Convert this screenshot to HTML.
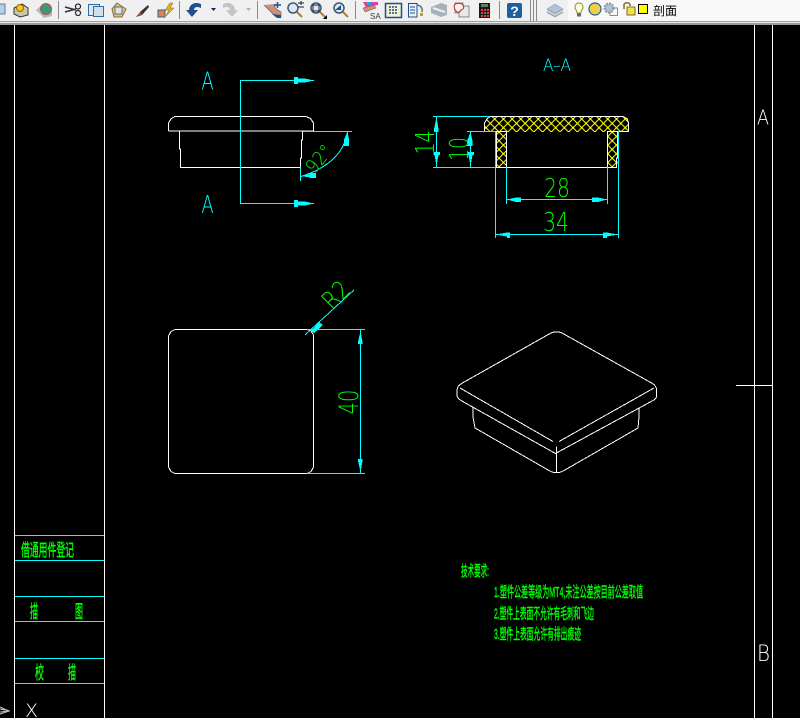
<!DOCTYPE html>
<html><head><meta charset="utf-8"><style>
html,body{margin:0;padding:0;background:#000;width:800px;height:718px;overflow:hidden}
svg{display:block}
text{font-family:"Liberation Sans","Noto Sans CJK SC",sans-serif}
.c{fill:#00ffff}.g{fill:#00ff00}.w{fill:#fff}
.t{font-family:"DejaVu Sans ExtraLight","DejaVu Sans Light","Liberation Sans",sans-serif}
.b{stroke:#00ff00;stroke-width:.45}
.x path,.x rect{shape-rendering:crispEdges}
</style></head><body>
<svg width="800" height="718" viewBox="0 0 800 718" xmlns="http://www.w3.org/2000/svg">
<defs>
<pattern id="h" width="8.7" height="8.7" patternUnits="userSpaceOnUse" x="486" y="119">
<path d="M0 0L8.7 8.7M8.7 0L0 8.7" stroke="#ffff00" stroke-width="1" fill="none" shape-rendering="crispEdges"/>
<rect x="3.4" y="3.4" width="2" height="2" fill="#ffff00"/>
<rect x="-1" y="-1" width="2" height="2" fill="#ffff00"/>
<rect x="7.7" y="-1" width="2" height="2" fill="#ffff00"/>
<rect x="-1" y="7.7" width="2" height="2" fill="#ffff00"/>
<rect x="7.7" y="7.7" width="2" height="2" fill="#ffff00"/>
</pattern>
</defs>
<rect width="800" height="718" fill="#000"/>

<!-- toolbar -->
<rect width="800" height="21" fill="#f0f0f0"/>
<rect y="21" width="800" height="1" fill="#a0a0a0"/>
<rect y="22" width="800" height="1" fill="#e8e8e8"/>
<rect y="23" width="800" height="2" fill="#9a9a9a"/>
<rect x="568" y="0" width="232" height="21" fill="#f8f8f8"/>
<g stroke="#8a8a8a" stroke-width="1">
<path d="M58.5 1V19M179.5 1V19M257.5 1V19M355.5 1V19M499.5 1V19"/>
<path d="M530.5 0V21M533.5 0V21M536.5 0V21"/>
</g>
<rect x="-3" y="4" width="8" height="10" fill="#b8cfe0" stroke="#5a80a8"/>
<path d="M14 8L22 4L28 8V15L20 17L14 14Z" fill="#c8c8b0" stroke="#333"/><circle cx="20" cy="8" r="3.5" fill="#f5c518" stroke="#a06010"/>
<path d="M36 10L44 3L52 8V16L44 18Z" fill="#a8bcc8"/><circle cx="46" cy="9" r="5.5" fill="#3a9a78" stroke="#c05050"/>
<path d="M65 7L76 10M65 12L76 9" stroke="#334" stroke-width="1.5"/><circle cx="78" cy="6.5" r="2.5" fill="none" stroke="#223" stroke-width="1.2"/><circle cx="78" cy="13" r="2.5" fill="none" stroke="#223" stroke-width="1.2"/>
<rect x="88.5" y="4.5" width="11" height="11" fill="#dce8f2" stroke="#2f6ca8"/><rect x="93.5" y="6.5" width="10" height="10" fill="#cfe0ec" stroke="#2f6ca8"/>
<path d="M112 9L117 3L126 9L122 17H114Z" fill="#e8c060" stroke="#807050"/><rect x="115" y="7" width="7" height="7" fill="#d8e4ee" stroke="#607080"/>
<path d="M136 17L140 12L148 5L149 7L142 15Z" fill="#333"/><path d="M136 17L140 12L142 14Z" fill="#a06040"/>
<rect x="158" y="10" width="7" height="7" fill="#f08040" stroke="#2060b0"/><path d="M170 3L165 10H169L166 16L174 8H170L173 3Z" fill="#e0b020" stroke="#806010" stroke-width=".5"/>
<path d="M201 4C194 1 189 5 189 10L186 10L192 17L198 10L194 10C194 7 197 6 201 8Z" fill="#1f4f8f"/>
<path d="M211 8H216L213.500 11Z" fill="#102060"/>
<path d="M223 4C230 1 235 5 235 10L238 10L232 17L226 10L230 10C230 7 227 6 223 8Z" fill="#c4c4c4"/>
<path d="M246 8H251L248.500 11Z" fill="#b0b0b0"/>
<path d="M264 5L272 13L277 17H281V12L275 8V4" fill="#c89080" stroke="#805060" stroke-width=".7"/><path d="M274 5H281M277.500 2V8" stroke="#1f4f8f" stroke-width="1.5"/><path d="M272 14L277 18H281V15Z" fill="#1f4f8f"/>
<g fill="#dde8f0" stroke="#3a5a70" stroke-width="1.5"><circle cx="293" cy="8" r="5"/><circle cx="316" cy="8" r="5"/><circle cx="339" cy="8" r="5"/></g>
<g stroke="#b07a30" stroke-width="2"><path d="M297 12L302 17M320 12L325 17M343 12L348 17"/></g>
<path d="M298 3H304M301 1V5M298 7H304" stroke="#123" stroke-width="1"/>
<rect x="313" y="5" width="6" height="6" fill="none" stroke="#223"/><path d="M323 19L327 15V19Z" fill="#000"/>
<path d="M335 10L341 5V10Z" fill="#1f4f8f"/>
<path d="M363 2H378V5L372 6L366 8Z" fill="#e040a0"/><path d="M367 2H371V5H367Z" fill="#30a0e0"/><path d="M363 8L374 5L376 8L365 12Z" fill="#c89080" stroke="#705050" stroke-width=".5"/><text x="370" y="19" font-size="8" fill="#304050">SA</text>
<rect x="385.500" y="3.500" width="16" height="14" fill="#f4f0d0" stroke="#1f4f8f" stroke-width="1.500"/><path d="M389 7H398M389 10H398M389 13H398" stroke="#1f4f8f" stroke-width="1.500" stroke-dasharray="2 1"/>
<path d="M408.500 3.500H417V17H408.500Z" fill="#e8f0f8" stroke="#1f4f8f"/><path d="M410 7H415M410 10H415M410 13H415" stroke="#1f4f8f"/><path d="M417 5Q423 6 422 12" fill="none" stroke="#607080" stroke-width="1.500"/><rect x="420" y="13" width="3" height="3" fill="#c0a020"/>
<path d="M431 7L441 3L447 5V15L441 17L431 13Z" fill="#a8b0b8"/><path d="M433 8L445 12" stroke="#e8f0f0" stroke-width="2"/>
<path d="M455 3H463V6H469V17H459V13H455Z" fill="#e8e8e8" stroke="#666" stroke-width=".7"/><path d="M455 4Q460 2 463 5Q465 9 461 10Q459 14 456 11Q453 8 455 4Z" fill="#f4f4f4" stroke="#d02020"/>
<rect x="479" y="3" width="11" height="15" fill="#1a1a1a"/><rect x="481" y="4" width="7" height="3" fill="#608060"/><path d="M481 9h2v2h-2zM484 9h2v2h-2zM487 9h2v2h-2zM481 12h2v2h-2zM484 12h2v2h-2zM487 12h2v2h-2zM481 15h2v2h-2zM484 15h2v2h-2zM487 15h2v2h-2z" fill="#e04040"/>
<rect x="507" y="3" width="15" height="15" rx="2" fill="#1f5f9f"/><text x="514.500" y="16" font-size="14" font-weight="bold" fill="#fff" text-anchor="middle">?</text>
<path d="M547 9L555 4L563 9L555 13Z" fill="#b0c4d8" stroke="#8090a0" stroke-width=".5"/><path d="M547 12L555 16.500L563 12" fill="none" stroke="#90a4b4" stroke-width="1.500"/><path d="M547 9.500L555 14L563 9.500" fill="none" stroke="#90a4b4"/>
<path d="M579 3C575 3 574.500 7 575.500 9C576.500 11 577 11 577 13H581C581 11 581.500 11 582.500 9C583.500 7 583 3 579 3Z" fill="#fdfde0" stroke="#90902a"/><rect x="577" y="13.500" width="4" height="3" fill="#667"/>
<circle cx="595" cy="9" r="6" fill="#f0d040" stroke="#2060a0" stroke-width="1.200"/>
<circle cx="609" cy="8" r="4.500" fill="#b0c0d0" stroke="#8898a8" stroke-width="2" stroke-dasharray="2 1"/><path d="M612 8H617.500V15.500H610V12" fill="none" stroke="#8090a0"/>
<path d="M624 9V5C624 2 630 2 630 5V6" fill="none" stroke="#807020" stroke-width="1.500"/><rect x="627" y="7" width="8" height="8" fill="#f0e050" stroke="#807020"/>
<rect x="638.500" y="4.500" width="9" height="9" fill="#ffff00" stroke="#000"/>
<text x="653" y="15" font-size="12" fill="#000" style='font-family:"Noto Sans CJK SC",sans-serif'>剖面</text>

<g class="x">
<g stroke="#fff" stroke-width="1" fill="none">
<path d="M14.500 25V718M104.500 25V718M754.500 25V718M772.500 25V718M736 385.500H772"/>
</g>
<g stroke="#0ff" fill="none" stroke-width="1">
<path d="M15 535.500H104M15 560.500H104M15 596.500H104M15 621.500H104M15 658.500H104M15 683.500H104"/>
</g>
<path d="M0 707L9 711L0 714M0 709L10 711M0 712L10 711" stroke="#bbb" fill="none"/>

<!-- front view -->
<g stroke="#fff" fill="none" stroke-width="1">
<path d="M168.500 131V123L171 119L174.500 116.500H306L310.500 118.500L313.500 123V131H168.500"/>
<path d="M179.500 131V149H180.500V167.500H300.500V158H301.500V140H302.500V131"/>
</g>
<g stroke="#0ff" fill="none" stroke-width="1">
<path d="M314 80.500H240.500V203.500H314"/>
<path d="M303 131.500H352M300.500 167V181"/>
<path d="M347.500 131.500Q343 163 301 176.500"/>
</g>
<g fill="#0ff">
<path d="M294 77H298V78.500H305L314 80.500L305 82.500H298V84H294Z"/>
<path d="M294 200H298V201.500H305L314 203.500L305 205.500H298V207H294Z"/>
<path d="M347.500 132L349 139V146H344V139.500Z"/>
<path d="M301 176L310 174V173H316V178H310V177.500Z"/>
</g>

<!-- section view -->
<path d="M484.500 131.500V123L487 119L490 116.500H623L627 118.500L628.500 123V131.500H617.500V167.500H496.500V131.500Z" fill="url(#h)"/>
<rect x="507" y="132" width="100" height="35" fill="#000"/>
<g stroke="#fff" fill="none" stroke-width="1">
<path d="M484.500 123L487 119L490 116.500H623L627 118.500L628.500 123V131.500H607.500V167.500H506.500V131.500H484.500Z"/>
<path d="M496.500 131.500V167.500H506.500M607.500 167.500H616.500V158H617.500V131.500"/>
</g>
<g stroke="#0ff" fill="none" stroke-width="1">
<path d="M433 116.500H489M433 167.500H496M436.500 116V167.500"/>
<path d="M467 131.500H495.500M470.500 131V167.500"/>
<path d="M495.500 131V238M618.500 131V238"/>
<path d="M506.500 167V204M607.500 167V204"/>
<path d="M506 199.500H607M495.500 234.500H618"/>
</g>
<g fill="#0ff">
<path d="M436.500 117L438.500 129V132H434V129Z"/><path d="M436.500 166L438.500 155H440V152H433.500V155H434.500Z"/>
<path d="M470.500 132L472.500 141V146H467V141Z"/><path d="M470.500 166L472.500 155H474V152H468V155H468.500Z"/>
<path d="M507 199.500L516 197.500H521V202H516Z"/><path d="M607 199.500L598 197.500H592V202H598Z"/>
<path d="M496 234.500L507 232.500H510V238H507V236.500Z"/><path d="M618 234.500L607 232.500H603V238H607V236.500Z"/>
</g>

<!-- plan view -->
<path d="M175 329.500H307L311 331L313.500 335V467L311 471.500L307 473.500H175L171 471.500L168.500 467V336L171 331.500Z" fill="none" stroke="#fff"/>
<g stroke="#0ff" fill="none" stroke-width="1">
<path d="M307 329.500H365M307 473.500H365M360.500 329V473"/>
<path d="M354 290L305 335"/>
</g>
<g fill="#0ff">
<path d="M360.500 331L362.500 342V344H358V342Z"/><path d="M360.500 472L362.500 461V459H358V461Z"/>
<path d="M311 331L319 322L323 325L314 333Z"/>
</g>

<!-- iso -->
<g stroke="#fff" fill="none" stroke-width="1">
<path d="M461.500 383.500L551 333Q556.500 330.500 562 333L652.500 383.500Q656.500 386 656.500 390V397Q656 399 653 400.500L560 451L555.500 453.500L551 451L461 400.500Q457 398 457 395V390Q457.500 386 461.500 383.500Z"/>
<path d="M460 388L553 441.500M654 388L559 441.500M556.500 446.500V473"/>
<path d="M473 407.500V417L475 428L549 470.500Q556.500 475 564 470.500L638 428L639 417V407.500"/>
</g>
</g>

<!-- text -->
<text x="757" y="124.500" font-size="20" class="w t" textLength="12" lengthAdjust="spacingAndGlyphs">A</text>
<text x="757" y="661" font-size="22" class="w t" textLength="13" lengthAdjust="spacingAndGlyphs">B</text>
<text x="25" y="717" font-size="19" class="w t" textLength="13" lengthAdjust="spacingAndGlyphs">X</text>
<g class="g b">
<text x="21" y="556" font-size="17" textLength="53" lengthAdjust="spacingAndGlyphs">借通用件登记</text>
<text x="30" y="618" font-size="18" textLength="8" lengthAdjust="spacingAndGlyphs">描</text>
<text x="75" y="618" font-size="18" textLength="8" lengthAdjust="spacingAndGlyphs">图</text>
<text x="35" y="679" font-size="18" textLength="9" lengthAdjust="spacingAndGlyphs">校</text>
<text x="68" y="679" font-size="18" textLength="8" lengthAdjust="spacingAndGlyphs">描</text>
<text x="461" y="576" font-size="15" textLength="28" lengthAdjust="spacingAndGlyphs">技术要求:</text>
<text x="494" y="597" font-size="15" textLength="149" lengthAdjust="spacingAndGlyphs">1.塑件公差等级为MT4,未注公差按目前公差取值</text>
<text x="494" y="618.500" font-size="15" textLength="100" lengthAdjust="spacingAndGlyphs">2.塑件上表面不允许有毛刺和飞边</text>
<text x="494" y="639" font-size="15" textLength="87" lengthAdjust="spacingAndGlyphs">3.塑件上表面允许有排出痕迹</text>
</g>
<text class="c t" font-size="25" text-anchor="middle" transform="translate(207.500 89.500) scale(.72 1)">A</text>
<text class="c t" font-size="25" text-anchor="middle" transform="translate(207.500 213) scale(.72 1)">A</text>
<text class="g t" font-size="19" text-anchor="middle" transform="translate(324 163) rotate(-50) scale(.9 1)">92°</text>
<text class="c t" font-size="17" x="543" y="71" textLength="28" lengthAdjust="spacingAndGlyphs">A–A</text>
<text class="g t" font-size="26" text-anchor="middle" transform="translate(557 197) scale(.78 1)">28</text>
<text class="g t" font-size="26" text-anchor="middle" transform="translate(556 231) scale(.78 1)">34</text>
<text class="g t" font-size="26" text-anchor="middle" transform="translate(434 142.500) rotate(-90) scale(.72 1)">14</text>
<text class="g t" font-size="26" text-anchor="middle" transform="translate(468 149) rotate(-90) scale(.72 1)">10</text>
<text class="g t" font-size="25" text-anchor="middle" transform="translate(342 301) rotate(-45) scale(.85 1)">R2</text>
<text class="g t" font-size="27" text-anchor="middle" transform="translate(358 402) rotate(-90) scale(.72 1)">40</text>
</svg>
</body></html>
